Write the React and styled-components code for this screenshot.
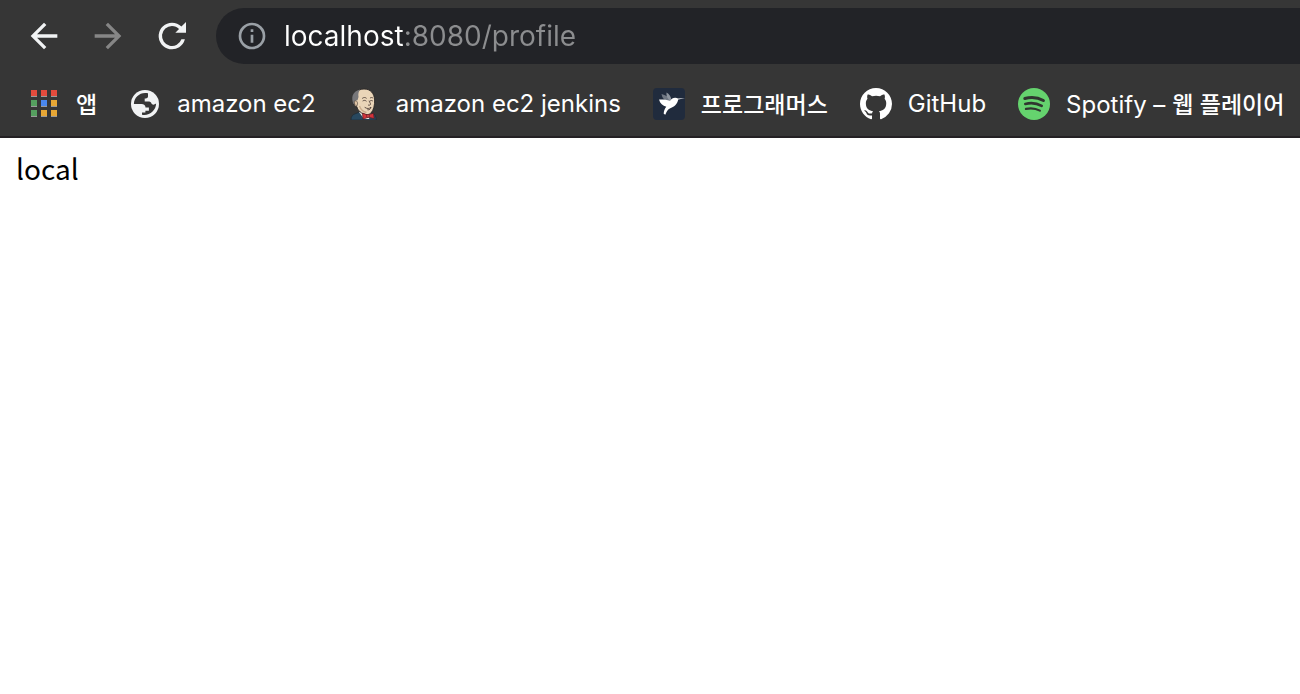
import React from "react";
import styled, { createGlobalStyle } from "styled-components";

const GlobalStyle = createGlobalStyle`
  *, *::before, *::after { box-sizing: border-box; }
  body { margin: 0; background: #fff; overflow-x: hidden; }
`;

const Browser = styled.div`
  display: flex;
  flex-direction: column;
  min-height: 100vh;
`;

const Chrome = styled.header`
  background: #363636;
  border-bottom: 2px solid #242124;
  font-family: Inter, "Noto Sans CJK KR", sans-serif;
  overflow: hidden;
`;

const Toolbar = styled.div`
  display: flex;
  align-items: center;
  gap: 24px;
  padding: 8px 0 8px 24px;
`;

const NavButton = styled.button`
  display: flex;
  flex: none;
  width: 40px;
  height: 40px;
  padding: 0;
  border: 0;
  background: none;
  color: ${(p) => (p.disabled ? "#868686" : "#f1f3f4")};

  svg { width: 40px; height: 40px; }
`;

const Omnibox = styled.form`
  display: flex;
  flex: 1;
  align-items: center;
  gap: 16px;
  height: 56px;
  padding-left: 20px;
  border-radius: 28px 0 0 28px;
  background: #222327;
`;

const InfoIcon = styled.svg`
  flex: none;
  width: 32px;
  height: 32px;
  color: #9aa0a6;
`;

const Address = styled.input`
  flex: 1;
  min-width: 0;
  height: 40px;
  padding: 0;
  border: 0;
  outline: 0;
  font: 400 28px/40px Inter, sans-serif;
  color: transparent;
  caret-color: #fff;
  background: linear-gradient(to right, #fff 120px, #8c8d8f 120px);
  background-clip: text;
`;

const Bookmarks = styled.nav`
  display: flex;
  align-items: center;
  gap: 32px;
  height: 64px;
  padding-left: 28px;
`;

const Bookmark = styled.a`
  display: flex;
  flex: none;
  align-items: center;
  gap: 16px;
  color: #fff;
  font-size: 24px;
  line-height: 32px;
  font-weight: 400;
  text-decoration: none;
  white-space: nowrap;

  svg { flex: none; width: 32px; height: 32px; }
`;

const Korean = styled.span.attrs({ lang: "ko" })`
  font-family: "Noto Sans CJK KR", sans-serif;
  font-size: 23px;
  font-weight: 500;
`;

const Page = styled.main`
  flex: 1;
  padding: 12px 16px;
  background: #fff;
  color: #000;
  font: 400 28px/36px "Noto Sans CJK KR", sans-serif;
`;

const appCells = [
  ["#e34b3d", "#e34b3d", "#e34b3d"],
  ["#559f5f", "#4a87ee", "#e7a735"],
  ["#559f5f", "#e7a735", "#e7a735"],
];

const AppsIcon = () => (
  <svg viewBox="0 0 32 32" aria-hidden="true">
    {appCells.map((row, y) =>
      row.map((fill, x) => (
        <g key={`${x}-${y}`}>
          <rect x={3 + x * 10} y={2 + y * 10} width="6" height="7" fill="#9a9a9a" />
          <rect x={3 + x * 10} y={2 + y * 10} width="6" height="6" fill={fill} />
        </g>
      ))
    )}
  </svg>
);

const GlobeIcon = () => (
  <svg viewBox="0 0 32 32" aria-hidden="true">
    <circle cx="16" cy="16" r="14" fill="#f1f3f4" />
    <path
      fill="#363636"
      d="M19 5.300C11.500 3.500 5 9 4.900 16h7.600c2.500 0 4 1.200 4 3.500h3.400v3.200h-3.500v1.800H13v2.200C20.500 28 27 22.500 27.100 15.500c-1.800 1.500-4 1.500-4.600 0-.5-1.300-1.500-1.900-3.500-1.900h-3.300v-3.200c1.800 0 3.300-.6 3.300-2Z"
    />
  </svg>
);

const JenkinsIcon = () => (
  <svg viewBox="0 0 32 32" aria-hidden="true">
    <path d="M3 32c0-3.500 1.500-5.600 5-6.500l4-1.500 12 1c3 .8 4 3.200 4.200 7Z" fill="#28485f" stroke="#1c2b36" strokeWidth=".7" />
    <path d="m11 24 5 7h5l2-6Z" fill="#e8e6e0" />
    <path d="M6 16C3.500 8 8 1 16 1c6.700 0 10.300 4.500 10.600 11 .2 5-.8 10-3.800 13.200-2.400 2.300-7.500 1.600-10.600-1.300-1.800-1.800-3-3.200-3.300-5.200C7.300 19 6.500 18 6 16Z" fill="#ead5b8" stroke="#2a2725" strokeWidth=".9" />
    <path d="M5.500 16C3 10 4 3.500 12 1.500c-1.500 2.200-2 4.500-1.500 7.500l-1 3.300c-2-.5-3 1-2.700 4Z" fill="#77777a" />
    <path d="M6.200 13.300c2.200-1.200 3.600.3 3.300 2.700l-.7 2c-1.600-.2-2.500-1.900-2.600-4.700Z" fill="#dfc3a4" stroke="#3c3530" strokeWidth=".6" />
    <path d="M14.500 10.200c1.200-1 2.800-1 3.800-.1m4-.2c1-.6 1.800-.5 2.500 0M15 12.800c1.100-.7 2.300-.6 3.200.2m4.200-.2c.9-.5 1.600-.4 2.200.1m-3.400.1c.2 1.600 1.800 2.400 1.200 3.600-.5.700-1.300.7-2 .5M17 19.500c2.500 1.500 4 1.400 6-.4-.3 2-1.500 2.900-3.200 2.700" fill="none" stroke="#50413a" strokeWidth=".9" strokeLinecap="round" />
    <path d="M11.500 18c1 3 3.500 5.700 7 6.500" fill="none" stroke="#c9ac8c" strokeWidth="1.300" />
    <path d="m14.500 25 5 2 6-1.800.7 5.300-6-1.200-5.200 1.900Z" fill="#d3343b" stroke="#54191e" strokeWidth=".7" />
    <circle cx="20" cy="28" r="1.400" fill="#ef4b50" stroke="#54191e" strokeWidth=".6" />
  </svg>
);

const ProgrammersIcon = () => (
  <svg viewBox="0 0 32 32" aria-hidden="true">
    <rect width="32" height="32" rx="4" fill="#202b3d" />
    <path d="M8.500 6c4 .8 7.500 3.200 9.500 6l-2.500 2C11.500 12.800 9 10 8.500 6Z" fill="#6f7783" />
    <path d="M13.500 4.500c2.800 1.600 4.300 4 4.800 7l-2 .7c-2.100-2-3.200-4.600-2.800-7.700Z" fill="#8d949e" />
    <path d="M6 11.500c4-.2 7.600.3 11 1.200 1.500-2 3.200-3 5.300-2.900 1.100.1 1.900.4 2.700.6l7-.1-6.800 1.300c-.9 4.600-4 7.500-8.400 8.900-2.300 1-3.300 3.300-4.500 6.300l-1.600-1c.1-2.800.9-5 2.600-7.100-3.500-.7-6.300-3.200-7.300-7.200Z" fill="#fff" />
  </svg>
);

const GitHubIcon = () => (
  <svg viewBox="0 0 16 16" aria-hidden="true">
    <path fill="#fff" d="M8 0C3.580 0 0 3.580 0 8c0 3.540 2.290 6.530 5.470 7.590.4.070.55-.17.55-.38 0-.19-.01-.82-.01-1.490-2.010.37-2.530-.49-2.690-.94-.09-.23-.48-.94-.82-1.130-.28-.15-.68-.52-.01-.53.63-.01 1.080.58 1.230.82.72 1.210 1.870.87 2.330.66.070-.52.280-.87.510-1.070-1.780-.2-3.640-.89-3.640-3.950 0-.87.310-1.590.82-2.150-.08-.2-.36-1.020.08-2.120 0 0 .67-.21 2.200.82.64-.18 1.320-.27 2-.27s1.360.09 2 .27c1.530-1.040 2.200-.82 2.200-.82.44 1.100.16 1.920.08 2.120.51.56.82 1.270.82 2.150 0 3.070-1.870 3.750-3.650 3.950.29.25.54.73.54 1.480 0 1.070-.01 1.930-.01 2.200 0 .21.15.46.55.38A8.010 8.010 0 0 0 16 8c0-4.420-3.580-8-8-8Z" />
  </svg>
);

const SpotifyIcon = () => (
  <svg viewBox="0 0 32 32" aria-hidden="true">
    <circle cx="16" cy="16" r="16" fill="#65d36e" />
    <g fill="none" stroke="#303630" strokeLinecap="round">
      <path d="M6.800 10.500c6.200-1.700 13.100-1.100 18.600 2" strokeWidth="3" />
      <path d="M7.300 15.900c5.700-1.500 11.500-.8 16.400 2" strokeWidth="2.600" />
      <path d="M7.900 20.900c5-1.100 9.800-.6 14 1.800" strokeWidth="2.100" />
    </g>
  </svg>
);

const bookmarks = [
  { id: "apps", label: <Korean>앱</Korean>, Icon: AppsIcon },
  { id: "ec2", label: "amazon ec2", Icon: GlobeIcon },
  { id: "jenkins", label: "amazon ec2 jenkins", Icon: JenkinsIcon },
  { id: "programmers", label: <Korean>프로그래머스</Korean>, Icon: ProgrammersIcon },
  { id: "github", label: "GitHub", Icon: GitHubIcon },
  { id: "spotify", label: <>Spotify – <Korean>웹 플레이어</Korean></>, Icon: SpotifyIcon },
];

export default function App() {
  return (
    <Browser>
      <GlobalStyle />
      <Chrome>
        <Toolbar>
          <NavButton type="button" aria-label="Back">
            <svg viewBox="0 0 24 24" fill="currentColor">
              <path d="M20 11H7.830l5.590-5.590L12 4l-8 8 8 8 1.410-1.410L7.830 13H20z" />
            </svg>
          </NavButton>
          <NavButton type="button" aria-label="Forward" disabled>
            <svg viewBox="0 0 24 24" fill="currentColor">
              <path d="M12 4l-1.410 1.410L16.170 11H4v2h12.170l-5.580 5.590L12 20l8-8z" />
            </svg>
          </NavButton>
          <NavButton type="button" aria-label="Reload">
            <svg viewBox="0 0 24 24" fill="currentColor">
              <path d="M17.650 6.350A7.960 7.960 0 0 0 12 4a8 8 0 1 0 7.730 10h-2.080A6 6 0 1 1 12 6c1.660 0 3.140.69 4.220 1.780L14 10h6.400V3.600z" />
            </svg>
          </NavButton>
          <Omnibox onSubmit={(e) => e.preventDefault()}>
            <InfoIcon viewBox="0 0 24 24" fill="currentColor" aria-hidden="true">
              <path d="M11 7h2v2h-2zm0 4h2v6h-2zm1-9a10 10 0 1 0 0 20 10 10 0 0 0 0-20zm0 18a8 8 0 1 1 0-16 8 8 0 0 1 0 16z" />
            </InfoIcon>
            <Address aria-label="Address" defaultValue="localhost:8080/profile" spellCheck={false} />
          </Omnibox>
        </Toolbar>
        <Bookmarks aria-label="Bookmarks">
          {bookmarks.map(({ id, label, Icon }) => (
            <Bookmark key={id} href={`#${id}`}>
              <Icon />
              <span>{label}</span>
            </Bookmark>
          ))}
        </Bookmarks>
      </Chrome>
      <Page>local</Page>
    </Browser>
  );
}
